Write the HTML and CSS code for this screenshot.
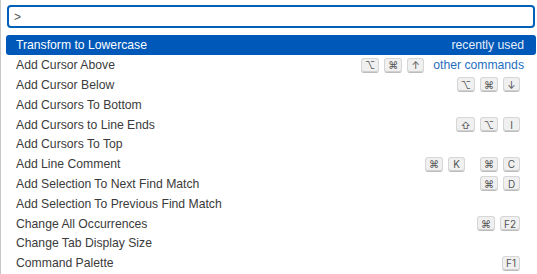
FILE: index.html
```html
<!DOCTYPE html>
<html>
<head>
<meta charset="utf-8">
<link rel="stylesheet" href="styles.css">
</head>
<body>
<div class="widget">
  <div class="input-wrap"><div class="input">&gt;</div></div>
  <ul class="list">
    <li class="row selected"><span class="label">Transform to Lowercase</span><span class="meta">recently used</span></li>
    <li class="row"><span class="label">Add Cursor Above</span><span class="keys"><kbd>⌥</kbd><kbd>⌘</kbd><kbd>↑</kbd></span><span class="meta link">other commands</span></li>
    <li class="row"><span class="label">Add Cursor Below</span><span class="keys"><kbd>⌥</kbd><kbd>⌘</kbd><kbd>↓</kbd></span></li>
    <li class="row"><span class="label">Add Cursors To Bottom</span></li>
    <li class="row"><span class="label">Add Cursors to Line Ends</span><span class="keys"><kbd>⇧</kbd><kbd>⌥</kbd><kbd>I</kbd></span></li>
    <li class="row"><span class="label">Add Cursors To Top</span></li>
    <li class="row"><span class="label">Add Line Comment</span><span class="keys"><kbd>⌘</kbd><kbd>K</kbd><span class="chord"></span><kbd>⌘</kbd><kbd>C</kbd></span></li>
    <li class="row"><span class="label">Add Selection To Next Find Match</span><span class="keys"><kbd>⌘</kbd><kbd>D</kbd></span></li>
    <li class="row"><span class="label">Add Selection To Previous Find Match</span></li>
    <li class="row"><span class="label">Change All Occurrences</span><span class="keys"><kbd>⌘</kbd><kbd>F2</kbd></span></li>
    <li class="row"><span class="label">Change Tab Display Size</span></li>
    <li class="row"><span class="label">Command Palette</span><span class="keys"><kbd>F1</kbd></span></li>
  </ul>
</div>
</body>
</html>
```
FILE: styles.css
```css
html, body {
  margin: 0;
  padding: 0;
  background: #ffffff;
}
body {
  font-family: "Liberation Sans", "Inter", sans-serif;
  font-size: 12.2px;
  color: #3b3b3b;
}
.widget {
  width: 537px;
  height: 274px;
  box-sizing: border-box;
  border-left: 1px solid #c8c8c8;
  padding: 5px 1px 0 5px;
  overflow: hidden;
}
.input-wrap {
  padding: 0 1px 0 1px;
}
.input {
  height: 23px;
  box-sizing: border-box;
  border: 2px solid #005fb8;
  border-radius: 4px;
  padding: 2px 0 0 5px;
  font-size: 12px;
  color: #555;
  line-height: 16px;
}
.list {
  list-style: none;
  margin: 7px 0 0 0;
  padding: 0;
}
.row {
  display: flex;
  align-items: center;
  height: 19.8px;
  padding: 1px 12px 0 10px;
  box-sizing: border-box;
  border-radius: 3px;
}
.row.selected {
  background: #0058b9;
  color: #ffffff;
}
.label {
  flex: 1;
  white-space: nowrap;
}
.meta {
  margin-left: 9px;
  white-space: nowrap;
}
.selected .meta {
  color: #e8eef8;
}
.meta.link {
  color: #1f6fc0;
}
.keys {
  display: flex;
  gap: 5px;
  margin-right: 4px;
}
.keys + .meta { margin-left: 9px; }
.row:has(.meta.link) .keys { margin-right: 0; }
.chord {
  width: 5px;
}
kbd {
  display: inline-flex;
  align-items: center;
  justify-content: center;
  box-sizing: border-box;
  min-width: 17px;
  height: 15px;
  padding: 0 3px;
  font-family: "Inter", "DejaVu Sans", sans-serif;
  font-size: 10px;
  color: #555;
  background: #f0f0f0;
  border: 1px solid #d6d6d6;
  border-bottom-color: #bcbcbc;
  border-radius: 3px;
  box-shadow: inset 0 -1px 0 #d0d0d0;
}
```
